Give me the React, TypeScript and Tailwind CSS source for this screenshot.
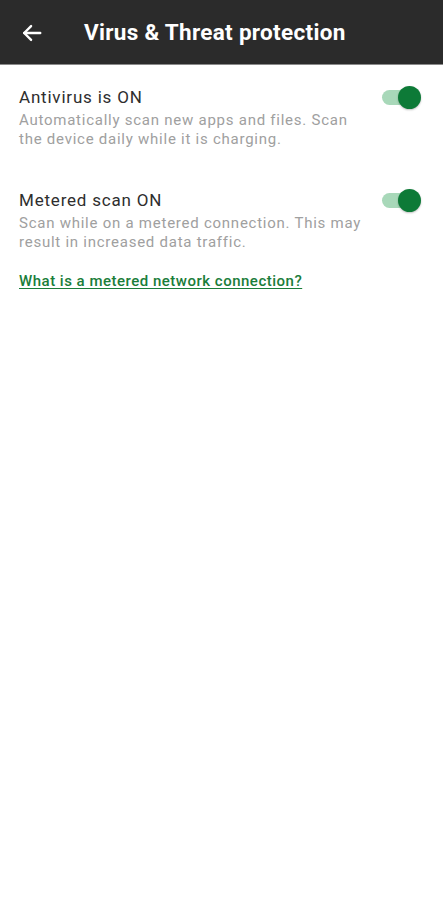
import React from "react";

function Toggle() {
  return (
    <div className="relative w-[39px] h-[24px] flex items-center shrink-0">
      <div className="absolute left-0 right-[4px] h-[15px] rounded-full bg-[#a8d8b9]" />
      <div className="absolute right-0 w-[23px] h-[23px] rounded-full bg-[#0d7a37] shadow-[0_1px_2px_rgba(0,0,0,0.25)]" />
    </div>
  );
}

export default function App() {
  return (
    <div className="w-[443px] min-h-[900px] bg-white" style={{ fontFamily: "Roboto, 'Noto Sans', sans-serif" }}>
      <div className="h-[65px] bg-[#2b2b2b] flex items-center border-b border-[#8a8a8a]">
        <div className="w-[84px] pl-[21px] flex items-center pt-[2px]">
          <svg width="22" height="22" viewBox="0 0 24 24" fill="none" stroke="white" strokeWidth="2.6" strokeLinecap="round" strokeLinejoin="round">
            <path d="M21 12H3.5" />
            <path d="M11 4.5 3.5 12l7.5 7.5" />
          </svg>
        </div>
        <div className="text-white text-[22.5px] font-bold tracking-[0.3px] pt-[2px]">Virus &amp; Threat protection</div>
      </div>

      <div className="pl-[19px] pr-[22px] pt-[21px]">
        <div className="flex items-start">
          <div className="flex-1">
            <div className="text-[17px] leading-[22px] tracking-[0.8px] text-[#2e2e2e]">Antivirus is ON</div>
            <div className="w-[348px] text-[15px] leading-[19px] tracking-[0.75px] text-[#a0a0a0] mt-[2.5px]">
              Automatically scan new apps and files. Scan the device daily while it is charging.
            </div>
          </div>
          <div className="mt-[-1px]">
            <Toggle />
          </div>
        </div>

        <div className="flex items-start mt-[40.5px]">
          <div className="flex-1">
            <div className="text-[17px] leading-[22px] tracking-[0.8px] text-[#2e2e2e]">Metered scan ON</div>
            <div className="w-[348px] text-[15px] leading-[19px] tracking-[0.75px] text-[#a0a0a0] mt-[2.5px]">
              Scan while on a metered connection. This may result in increased data traffic.
            </div>
          </div>
          <div className="mt-[-1px]">
            <Toggle />
          </div>
        </div>

        <div className="mt-[20px] text-[15px] leading-[19px] tracking-[0.5px] font-medium text-[#1a7d3a] underline underline-offset-2">
          What is a metered network connection?
        </div>
      </div>
    </div>
  );
}
